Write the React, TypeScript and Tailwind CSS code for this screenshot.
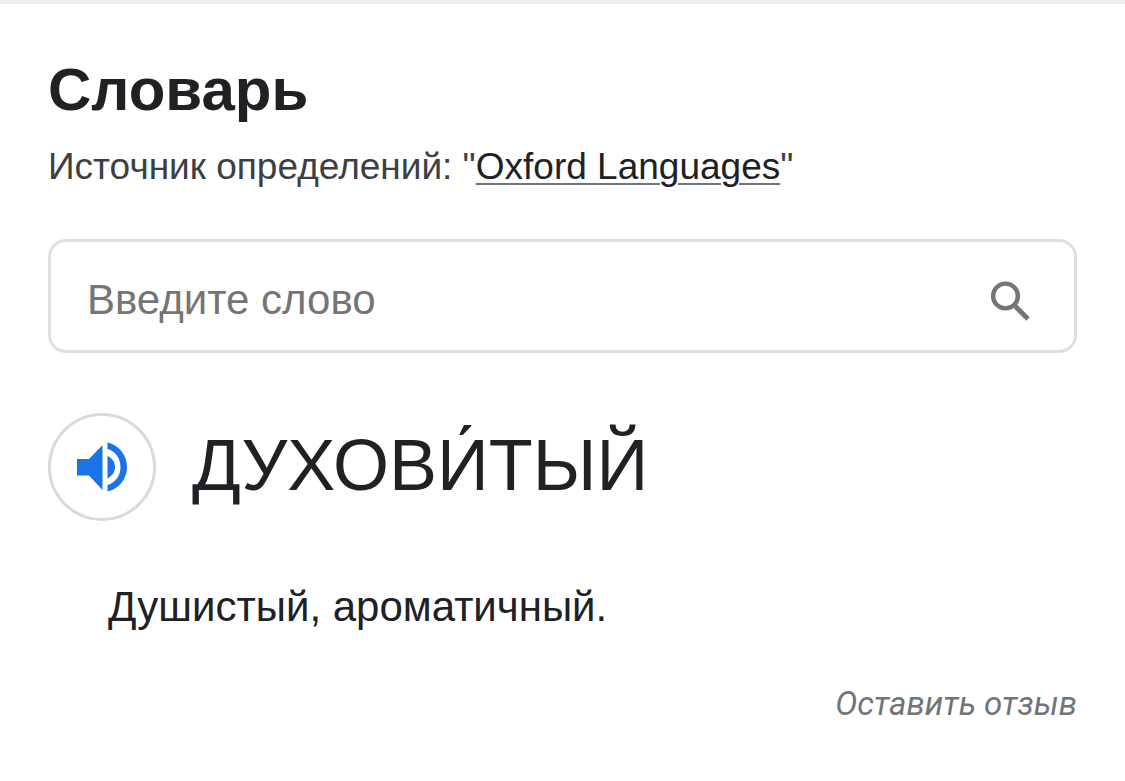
import React, { useState } from 'react';

const SearchIcon: React.FC<{ className?: string }> = ({ className }) => (
    <svg className={className} viewBox="0 0 56 56" fill="none" stroke="currentColor" aria-hidden="true">
        <circle cx="23.5" cy="24" r="12.4" strokeWidth="4.4" />
        <path d="M32 32.500l3 3" strokeWidth="3" />
        <path d="M33.500 34.500l12.500 12.500" strokeWidth="5" />
    </svg>
);

const SpeakerIcon: React.FC<{ className?: string }> = ({ className }) => (
    <svg className={className} viewBox="0 0 68 68" fill="currentColor" aria-hidden="true">
        <path d="M9 26h12L34.500 12v45L21 42.500H9z" />
        <path d="M39.500 23c4.500 2 7.500 6 7.500 11s-3 9-7.500 11.500z" />
        <path d="M39.500 9.500C51 12 59 22 59 34s-8 22-19.500 24.500v-6.500C47.500 49.500 52.500 43 52.500 34s-5-15.500-13-18z" />
    </svg>
);

const App: React.FC = () => {
    const [query, setQuery] = useState('');

    return (
        <main className="border-t-4 border-[#ededed] bg-white px-12 pt-12 pb-10 font-['Liberation_Sans',Arial,sans-serif] text-[#202124]">
            <h1 className="pt-1 text-[60px] leading-[68px] font-bold">Словарь</h1>
            <p className="mt-5 text-[37px] leading-[46px] text-[#3c4043]">
                Источник определений: "<a href="#oxford" className="text-[#202124] underline decoration-[#70757a] decoration-2 underline-offset-4">Oxford Languages</a>"
            </p>

            <form role="search" onSubmit={(e) => e.preventDefault()} className="mt-[49px] flex h-[114px] items-center rounded-[18px] border-3 border-[#dfdfdf] px-9 pt-2">
                <input
                    type="text"
                    aria-label="Введите слово"
                    value={query}
                    onChange={(e) => setQuery(e.target.value)}
                    placeholder="Введите слово"
                    className="h-full min-w-0 flex-1 text-[42px] placeholder:text-[#757575] focus:outline-none"
                />
                <button type="submit" aria-label="Поиск" className="text-[#757575]">
                    <SearchIcon className="size-14" />
                </button>
            </form>

            <section className="mt-15">
                <div className="flex items-center gap-9">
                    <button type="button" aria-label="Прослушать" className="flex size-27 shrink-0 items-center justify-center rounded-full border-3 border-[#dadada] text-[#1a73e8]">
                        <SpeakerIcon className="size-17 shrink-0" />
                    </button>
                    <h2 className="pb-1 text-[72px] leading-[84px]">ДУХОВИ́ТЫЙ</h2>
                </div>
                <p className="mt-15 pl-15 text-[42px] leading-[52px]">Душистый, ароматичный.</p>
            </section>

            <footer className="mt-12 flex justify-end">
                <a href="#feedback" className="font-[Roboto,sans-serif] text-[33px] leading-[46px] text-[#70757a] italic">Оставить отзыв</a>
            </footer>
        </main>
    );
};

export default App;
